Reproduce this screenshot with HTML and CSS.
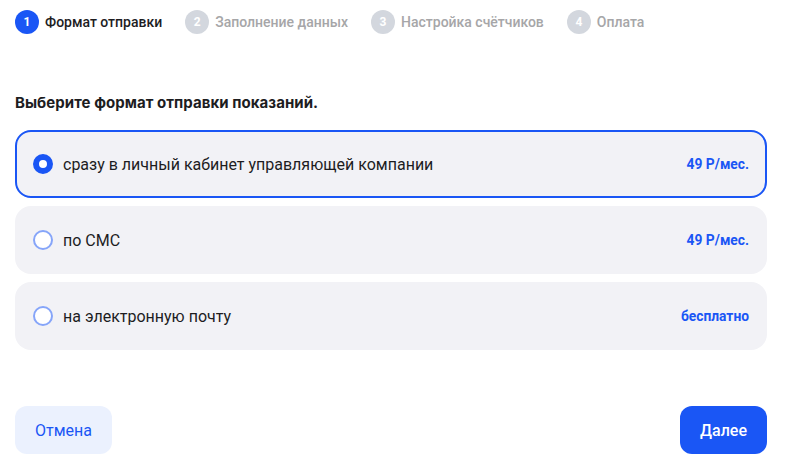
FILE: index.html
```html
<!DOCTYPE html>
<html lang="ru">
<head>
<meta charset="utf-8">
<link rel="stylesheet" href="styles.css">
</head>
<body>
<div class="page">
  <nav class="steps">
    <div class="step active"><span class="num">1</span><span class="label">Формат отправки</span></div>
    <div class="step"><span class="num">2</span><span class="label">Заполнение данных</span></div>
    <div class="step"><span class="num">3</span><span class="label">Настройка счётчиков</span></div>
    <div class="step"><span class="num">4</span><span class="label">Оплата</span></div>
  </nav>
  <h2 class="title">Выберите формат отправки показаний.</h2>
  <div class="options">
    <label class="option selected"><span class="radio"></span><span class="text">сразу в личный кабинет управляющей компании</span><span class="price">49 Р/мес.</span></label>
    <label class="option"><span class="radio"></span><span class="text">по СМС</span><span class="price">49 Р/мес.</span></label>
    <label class="option"><span class="radio"></span><span class="text">на электронную почту</span><span class="price">бесплатно</span></label>
  </div>
  <div class="actions">
    <button class="btn btn-secondary">Отмена</button>
    <button class="btn btn-primary">Далее</button>
  </div>
</div>
</body>
</html>
```
FILE: styles.css
```css
* { box-sizing: border-box; }
html, body { margin: 0; background: #fff; }
body {
  font-family: Roboto, "Noto Sans", sans-serif;
  color: #1d1d1f;
  width: 790px;
  height: 472px;
  overflow: hidden;
}
.page {
  padding: 10px 23px 0 15px;
  display: flex;
  flex-direction: column;
}
.steps {
  display: flex;
  gap: 23px;
  height: 24px;
  align-items: center;
}
.step {
  display: flex;
  align-items: center;
  gap: 6px;
}
.num {
  width: 24px;
  height: 24px;
  border-radius: 50%;
  background: #d3d7de;
  color: #fff;
  font-size: 12px;
  font-weight: 700;
  display: flex;
  align-items: center;
  justify-content: center;
}
.label {
  font-size: 14px;
  font-weight: 500;
  color: #a6a6a8;
}
.step.active .num { background: #1a56f5; }
.step.active .label { color: #1d1d1f; }

.title {
  margin: 60px 0 0;
  font-family: Inter, sans-serif;
  font-size: 15px;
  font-weight: 700;
  line-height: 18px;
  color: #1d1d1f;
  letter-spacing: 0.05px;
}
.options {
  margin-top: 18px;
  display: flex;
  flex-direction: column;
  gap: 8px;
}
.option {
  height: 68px;
  border-radius: 16px;
  background: #f2f2f6;
  border: 2px solid transparent;
  display: flex;
  align-items: center;
  padding: 0 16px 0 16px;
}
.option.selected { border-color: #1a56f5; }
.radio {
  width: 20px;
  height: 20px;
  border-radius: 50%;
  border: 2px solid #86a5f9;
  background: #fff;
  flex: none;
}
.option.selected .radio { border: 6px solid #1a56f5; }
.text {
  margin-left: 10px;
  font-size: 16px;
  color: #1d1d1f;
  flex: 1;
}
.price {
  font-size: 13.8px;
  font-weight: 700;
  color: #1a56f5;
}
.actions {
  margin-top: 56px;
  display: flex;
  justify-content: space-between;
}
.btn {
  height: 48px;
  border: none;
  border-radius: 12px;
  font-family: Roboto, sans-serif;
  font-size: 16px;
  padding: 0 20px;
}
.btn-secondary { background: #ebf1fe; color: #1a56f5; width: 97px; }
.btn-primary { background: #1a56f5; color: #fff; width: 87px; font-weight: 500; }
```
